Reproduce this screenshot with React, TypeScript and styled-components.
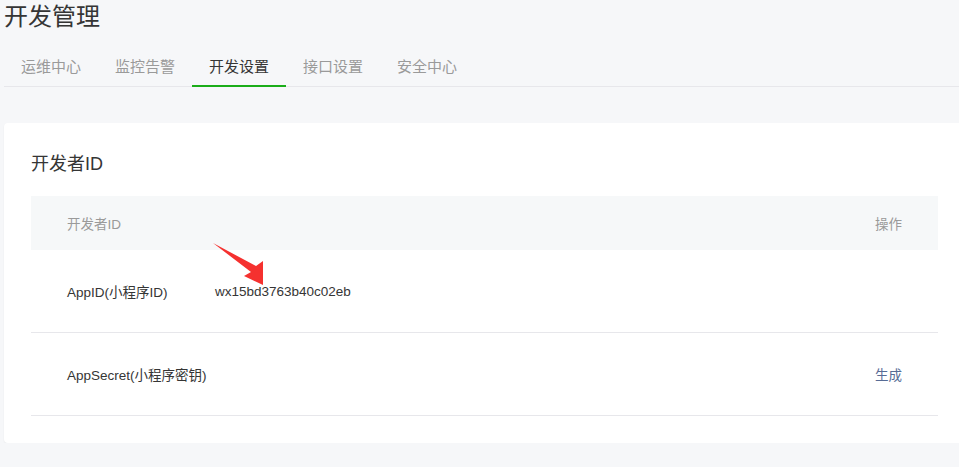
import styled, { createGlobalStyle } from 'styled-components'

const GlobalStyle = createGlobalStyle`
  html, body {
    margin: 0;
    padding: 0;
    background-color: #f6f7f9;
    overflow: hidden;
  }
  body {
    font-family: "Liberation Sans", "Noto Sans CJK SC", sans-serif;
    color: #353535;
  }
`

const Page = styled.div`
  position: relative;
  width: 961px;
  margin-left: 4px;
`

const PageTitle = styled.h1`
  margin: 0;
  padding-top: 2px;
  font-size: 24px;
  line-height: 30px;
  font-weight: 400;
  color: #353535;
`

const TabNav = styled.nav`
  display: flex;
  margin-top: 16px;
  border-bottom: 1px solid #e7e7eb;
`

const Tab = styled.a<{ $active?: boolean }>`
  display: block;
  padding: 0 17px;
  height: 37px;
  line-height: 37px;
  margin-bottom: -1px;
  font-size: 15px;
  color: ${(p) => (p.$active ? '#353535' : '#9a9a9a')};
  border-bottom: 2px solid ${(p) => (p.$active ? '#1aad19' : 'transparent')};
  cursor: pointer;
`

const Card = styled.section`
  margin-top: 36px;
  box-sizing: border-box;
  width: 961px;
  padding: 29px 27px 27px;
  background-color: #fff;
  border-radius: 4px;
  box-shadow: 0 1px 2px rgba(0, 0, 0, 0.06);
`

const CardTitle = styled.h2`
  margin: 0 0 20px;
  font-size: 18px;
  line-height: 24px;
  font-weight: 400;
  color: #353535;
`

const Row = styled.div<{ $head?: boolean }>`
  display: grid;
  grid-template-columns: 148px 1fr auto;
  align-items: center;
  height: ${(p) => (p.$head ? '54px' : '82px')};
  font-size: 13.5px;
  color: ${(p) => (p.$head ? '#9a9a9a' : '#353535')};
  background-color: ${(p) => (p.$head ? '#f6f8f9' : 'transparent')};
  border-bottom: ${(p) => (p.$head ? 'none' : '1px solid #e7e7eb')};
`

const Cell = styled.div<{ $right?: boolean }>`
  padding: ${(p) => (p.$right ? '0 36px 0 0' : '0 0 0 36px')};
  text-align: ${(p) => (p.$right ? 'right' : 'left')};
  white-space: nowrap;
`

const Link = styled.a`
  color: #576b95;
  cursor: pointer;
`

const Arrow = styled.svg`
  position: absolute;
  left: 199px;
  top: 235px;
`

const tabs = ['运维中心', '监控告警', '开发设置', '接口设置', '安全中心']

export default function App() {
  return (
    <>
      <GlobalStyle />
      <Page>
        <PageTitle>开发管理</PageTitle>
        <TabNav>
          {tabs.map((t) => (
            <Tab key={t} $active={t === '开发设置'}>
              {t}
            </Tab>
          ))}
        </TabNav>
        <Card>
          <CardTitle>开发者ID</CardTitle>
          <Row $head>
            <Cell>开发者ID</Cell>
            <Cell />
            <Cell $right>操作</Cell>
          </Row>
          <Row>
            <Cell>AppID(小程序ID)</Cell>
            <Cell>wx15bd3763b40c02eb</Cell>
            <Cell $right />
          </Row>
          <Row>
            <Cell>AppSecret(小程序密钥)</Cell>
            <Cell />
            <Cell $right>
              <Link>生成</Link>
            </Cell>
          </Row>
        </Card>
        <Arrow width="70" height="60" viewBox="0 0 70 60">
          <polygon
            points="10,8 53,31 60,26 60,50 41,41 48,37"
            fill="#f5312f"
          />
        </Arrow>
      </Page>
    </>
  )
}
